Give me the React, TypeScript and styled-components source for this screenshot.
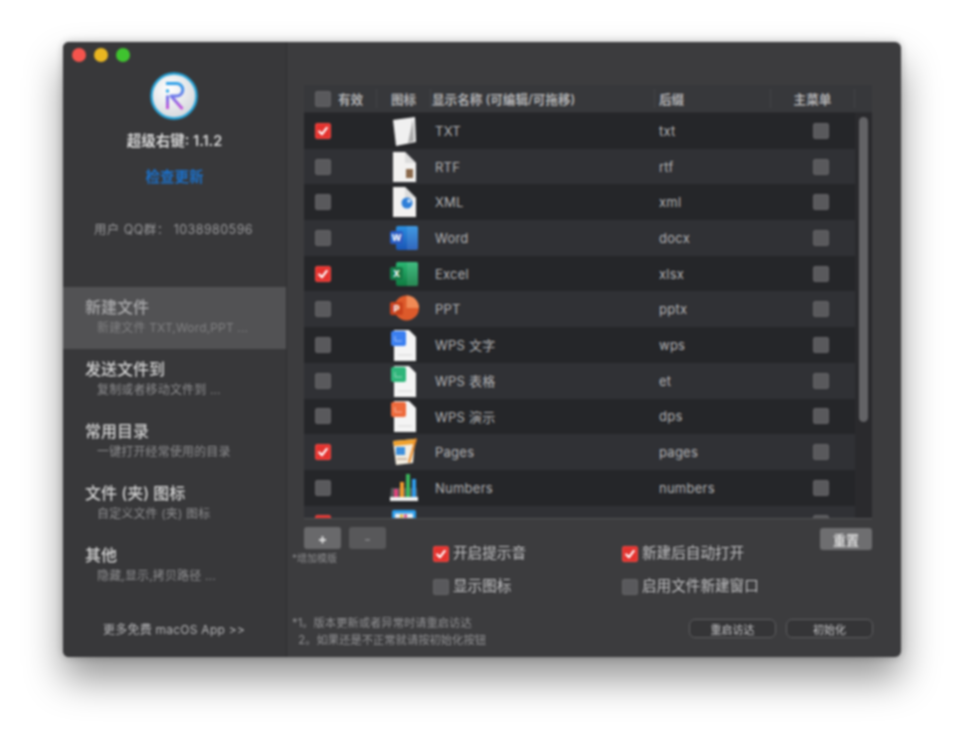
import React from "react";
import styled, { createGlobalStyle } from "styled-components";

const Global = createGlobalStyle`
  html, body { margin: 0; padding: 0; background: #ffffff; }
  body { font-family: Inter, "Noto Sans CJK SC", sans-serif; }
`;

const Page = styled.div`
  width: 964px;
  height: 740px;
  box-sizing: border-box;
  padding: 42px 63px 83px;
  overflow: hidden;
  background: #fff;
`;
const Window = styled.div`
  position: relative;
  width: 838px;
  height: 615px;
  display: flex;
  border-radius: 6px;
  background: #3c3c3e;
  box-shadow: 0 22px 38px rgba(0, 0, 0, 0.42), 0 0 8px rgba(0, 0, 0, 0.25);
  overflow: hidden;
  filter: blur(0.8px);
`;
const Lights = styled.div`
  position: absolute;
  left: 9px;
  top: 6px;
  display: flex;
  gap: 8px;
`;
const Light = styled.span<{ $c: string }>`
  width: 14px;
  height: 14px;
  border-radius: 50%;
  background: ${(p) => p.$c};
`;
const Sidebar = styled.aside`
  width: 224px;
  flex: none;
  display: flex;
  flex-direction: column;
  align-items: stretch;
  padding-top: 30px;
  background: #38383a;
  border-right: 1px solid #2f2f31;
  box-sizing: border-box;
`;
const Logo = styled.svg`
  width: 48px;
  height: 48px;
  align-self: center;
  margin-left: -1px;
`;
const AppName = styled.div`
  margin-top: 11px;
  text-align: center;
  font-size: 14.5px;
  line-height: 20px;
  font-weight: 600;
  color: #d6d6d6;
`;
const Link = styled.div`
  margin-top: 16px;
  text-align: center;
  font-size: 14.5px;
  line-height: 20px;
  font-weight: 600;
  color: #1c6fc6;
`;
const QQ = styled.div`
  margin-top: 33px;
  margin-left: -2px;
  text-align: center;
  font-size: 12.5px;
  line-height: 20px;
  color: #99999b;
  letter-spacing: 0.45px;
`;
const NavList = styled.nav`
  margin-top: 47px;
  display: flex;
  flex-direction: column;
`;
const NavItem = styled.div<{ $active?: boolean }>`
  height: 62px;
  box-sizing: border-box;
  padding: 10px 0 0 22px;
  background: ${(p) => (p.$active ? "#525254" : "transparent")};
`;
const NavTitle = styled.div<{ $active?: boolean }>`
  font-size: 16px;
  line-height: 20px;
  font-weight: 500;
  color: ${(p) => (p.$active ? "#a9a9ab" : "#d2d2d2")};
`;
const NavSub = styled.div<{ $active?: boolean }>`
  margin: 2px 0 0 12px;
  font-size: 12px;
  line-height: 18px;
  letter-spacing: 0.15px;
  color: ${(p) => (p.$active ? "#808082" : "#8e8e90")};
`;
const More = styled.div`
  margin-top: 23px;
  text-align: center;
  font-size: 12px;
  line-height: 20px;
  letter-spacing: 0.25px;
  color: #b4b4b6;
  margin-left: -1px;
`;
const Main = styled.main`
  flex: 1;
  display: flex;
  flex-direction: column;
  padding: 43px 29px 0 4px;
  min-width: 0;
`;
const Table = styled.section`
  position: relative;
  margin-left: 13px;
  height: 434px;
  flex: none;
  background: #2a2a2d;
  border-bottom: 1px solid #525254;
  box-sizing: border-box;
  overflow: hidden;
`;
const Columns = `73px 54px 224px 116px 84px 17px`;
const Header = styled.div`
  display: grid;
  grid-template-columns: ${Columns};
  height: 28px;
  background: #37383b;
  border-bottom: 1px solid #2d2d30;
  box-sizing: border-box;
`;
const HeadCell = styled.div<{ $center?: boolean; $last?: boolean; $pad?: number }>`
  display: flex;
  align-items: center;
  justify-content: ${(p) => (p.$center ? "center" : "flex-start")};
  gap: 7px;
  padding-left: ${(p) => (p.$center ? 0 : p.$pad ?? 1)}px;
  font-size: 12.6px;
  font-weight: 600;
  color: #b0b0b2;
  border-right: ${(p) => (p.$last ? "none" : "1px solid #434446")};
  margin: 4px 0;
  white-space: nowrap;
`;
const FirstHead = styled(HeadCell)`
  padding-left: 11px;
`;
const Body = styled.div`
  display: flex;
  flex-direction: column;
  width: 551px;
`;
const Row = styled.div<{ $odd: boolean }>`
  display: grid;
  grid-template-columns: 73px 54px 224px 116px 84px;
  flex: none;
  height: 35.7px;
  align-items: center;
  background: ${(p) => (p.$odd ? "#252629" : "#303135")};
  font-size: 13px;
  color: #b4b4b6;
`;
const BoxCell = styled.div`
  padding-left: 11px;
  display: flex;
`;
const IconCell = styled.div`
  display: flex;
  justify-content: center;
`;
const NameCell = styled.div`
  padding-left: 4px;
  letter-spacing: 0.25px;
`;
const MenuCell = styled.div`
  display: flex;
  justify-content: center;
  padding-left: 15px;
`;
const Box = styled.span<{ $on?: boolean }>`
  width: 16px;
  height: 16px;
  flex: none;
  border-radius: 3px;
  display: inline-flex;
  align-items: center;
  justify-content: center;
  background: ${(p) => (p.$on ? "#e4332f" : "#59595c")};
  box-shadow: inset 0 0 0 1px ${(p) => (p.$on ? "#ee4a45" : "#636366")};
`;
const ScrollThumb = styled.div`
  position: absolute;
  left: 555px;
  top: 32px;
  width: 9px;
  height: 305px;
  border-radius: 5px;
  background: #636366;
`;
const Controls = styled.div`
  display: grid;
  grid-template-columns: 142px 189px 1fr auto;
  padding-top: 8px;
  height: 96px;
  box-sizing: border-box;
`;
const LeftTools = styled.div`
  display: flex;
  flex-direction: column;
`;
const ToolRow = styled.div`
  display: flex;
  gap: 8px;
  margin-left: 13px;
`;
const ToolBtn = styled.div<{ $dim?: boolean }>`
  width: 37px;
  height: 22px;
  border-radius: 3px;
  background: ${(p) => (p.$dim ? "#58585a" : "#69696b")};
  color: ${(p) => (p.$dim ? "#838385" : "#e2e2e2")};
  font-size: 14px;
  font-weight: 700;
  display: flex;
  align-items: center;
  justify-content: center;
`;
const Hint = styled.div`
  margin: 3px 0 0 1px;
  font-size: 10px;
  line-height: 13px;
  color: #8d8d8f;
`;
const OptionCol = styled.div`
  display: flex;
  flex-direction: column;
  gap: 16px;
  padding-top: 18px;
`;
const Option = styled.label`
  display: flex;
  align-items: center;
  gap: 4px;
  font-size: 14.6px;
  line-height: 17px;
  color: #c0c0c2;
`;
const ResetBtn = styled.div`
  width: 52px;
  height: 22px;
  margin-top: 1px;
  border-radius: 3px;
  background: #6e6e70;
  color: #dcdcdc;
  font-size: 13px;
  font-weight: 600;
  display: flex;
  align-items: center;
  justify-content: center;
`;
const Footer = styled.div`
  display: flex;
  justify-content: space-between;
  align-items: flex-start;
`;
const Notes = styled.div`
  margin-left: 1px;
  font-size: 11.3px;
  line-height: 17px;
  color: #929294;
  white-space: pre;
`;
const Actions = styled.div`
  display: flex;
  gap: 10px;
  margin-top: 4px;
  margin-right: -1px;
`;
const Outline = styled.div`
  width: 87px;
  height: 19px;
  box-sizing: border-box;
  border: 1px solid #5e5e60;
  border-radius: 6px;
  background: #353537;
  color: #c6c6c8;
  font-size: 11px;
  display: flex;
  align-items: center;
  justify-content: center;
`;

const Check = () => (
  <svg width="12" height="12" viewBox="0 0 12 12">
    <path d="M2.2 6.4 5 9.2 9.8 2.8" fill="none" stroke="#fff" strokeWidth="2.1" strokeLinecap="round" strokeLinejoin="round" />
  </svg>
);
const CheckBox = ({ on }: { on?: boolean }) => <Box $on={on}>{on && <Check />}</Box>;

const Doc = ({ children }: { children?: React.ReactNode }) => (
  <svg width="36" height="34" viewBox="0 0 36 34">
    <path d="M7 2h12l11 11v19H7z" fill="#f2f1f0" />
    <path d="M19 2v11h11z" fill="#dcdcdc" />
    {children}
  </svg>
);
const WpsDoc = ({ c }: { c: string }) => (
  <svg width="36" height="34" viewBox="0 0 36 34">
    <path d="M8 2h15l7 7v24H8z" fill="#f4f4f4" />
    <path d="M12 27h14" stroke="#d6d6d6" strokeWidth="1" />
    <rect x="5" y="3" width="15" height="15" rx="2" fill={c} />
    <path d="M9 8v5h7" stroke="#ffffff" strokeOpacity=".5" fill="none" />
  </svg>
);
const Office = ({ id, top, bottom, tile, l }: { id: string; top: string; bottom: string; tile: string; l: string }) => (
  <svg width="36" height="34" viewBox="0 0 36 34">
    <defs>
      <linearGradient id={id} x1="0" y1="0" x2="0" y2="1">
        <stop offset="0" stopColor={top} />
        <stop offset="1" stopColor={bottom} />
      </linearGradient>
    </defs>
    <rect x="10" y="5" width="22" height="24" rx="2" fill={`url(#${id})`} />
    <rect x="21" y="5" width="11" height="24" fill="#fff" fillOpacity=".1" />
    <rect x="4" y="10" width="13" height="13" rx="2" fill={tile} />
    <text x="10.5" y="20" textAnchor="middle" fontSize="9.5" fontWeight="700" fill="#fff" fontFamily="Inter, sans-serif">{l}</text>
  </svg>
);
const icons: Record<string, React.ReactNode> = {
  TXT: (
    <svg width="36" height="34" viewBox="0 0 36 34">
      <path d="M7 6 29 3l1 25-20 4z" fill="#f0f0f0" />
      <path d="M27 5l1 22-6 2z" fill="#a9a9a9" />
    </svg>
  ),
  RTF: (
    <Doc>
      <rect x="20" y="19" width="7" height="9" fill="#8b6a4c" />
    </Doc>
  ),
  XML: (
    <Doc>
      <circle cx="21" cy="18" r="5.5" fill="#2f7fd8" />
      <circle cx="23" cy="16" r="1.8" fill="#d4e8fb" />
    </Doc>
  ),
  Word: <Office id="gw" top="#2b8fe0" bottom="#1a55b5" tile="#2a5bc2" l="W" />,
  Excel: <Office id="gx" top="#2bb673" bottom="#0f7a40" tile="#167a47" l="X" />,
  PPT: (
    <svg width="36" height="34" viewBox="0 0 36 34">
      <circle cx="20.5" cy="16" r="12.5" fill="#dd5a2b" />
      <path d="M20.5 3.500a12.500 12.500 0 0 1 12.500 12.500H20.500z" fill="#f08a55" />
      <rect x="4" y="10" width="13" height="13" rx="2" fill="#c8421d" />
      <text x="10.5" y="20" textAnchor="middle" fontSize="9.5" fontWeight="700" fill="#fff" fontFamily="Inter, sans-serif">P</text>
    </svg>
  ),
  "WPS 文字": <WpsDoc c="#3b7ff0" />,
  "WPS 表格": <WpsDoc c="#2fb57a" />,
  "WPS 演示": <WpsDoc c="#ee6a3c" />,
  Pages: (
    <svg width="36" height="34" viewBox="0 0 36 34">
      <path d="M7 6 29 4l-2 24-17 2z" fill="#f2ecdf" />
      <path d="M7 6 29 4l-.5 5L8 11z" fill="#f0a12e" />
      <rect x="10" y="12" width="9" height="8" fill="#3d8fdc" />
      <path d="M29 3l2 1-7 24-2-1z" fill="#e88b2c" />
      <path d="M11 24h10" stroke="#c9b8a8" strokeWidth="2" />
    </svg>
  ),
  Numbers: (
    <svg width="36" height="34" viewBox="0 0 36 34">
      <path d="M5 17h26l1 13H4z" fill="#ececec" fillOpacity=".25" />
      <rect x="4" y="26" width="28" height="4" fill="#f2f2f2" />
      <rect x="8" y="18" width="4" height="8" fill="#e0457b" />
      <rect x="14" y="11" width="4" height="15" fill="#ef9a2d" />
      <rect x="20" y="3" width="4" height="23" fill="#3bb35a" />
      <rect x="26" y="8" width="4" height="18" fill="#2f9be8" />
    </svg>
  ),
  Keynote: (
    <svg width="36" height="34" viewBox="0 0 36 34">
      <rect x="6" y="4" width="24" height="22" rx="2" fill="#2b9be8" />
      <rect x="9" y="7.500" width="18" height="8" fill="#e8eef2" />
      <rect x="14" y="8.500" width="3" height="3" fill="#e8b52f" />
      <rect x="18" y="8.500" width="3" height="3" fill="#e0457b" />
    </svg>
  ),
};

const rows: { id: string; name: string; ext: string; on: boolean }[] = [
  { id: "TXT", name: "TXT", ext: "txt", on: true },
  { id: "RTF", name: "RTF", ext: "rtf", on: false },
  { id: "XML", name: "XML", ext: "xml", on: false },
  { id: "Word", name: "Word", ext: "docx", on: false },
  { id: "Excel", name: "Excel", ext: "xlsx", on: true },
  { id: "PPT", name: "PPT", ext: "pptx", on: false },
  { id: "WPS 文字", name: "WPS 文字", ext: "wps", on: false },
  { id: "WPS 表格", name: "WPS 表格", ext: "et", on: false },
  { id: "WPS 演示", name: "WPS 演示", ext: "dps", on: false },
  { id: "Pages", name: "Pages", ext: "pages", on: true },
  { id: "Numbers", name: "Numbers", ext: "numbers", on: false },
  { id: "Keynote", name: "", ext: "", on: true },
];

const nav: [string, string][] = [
  ["新建文件", "新建文件 TXT,Word,PPT ..."],
  ["发送文件到", "复制或者移动文件到 ..."],
  ["常用目录", "一键打开经常使用的目录"],
  ["文件 (夹) 图标", "自定义文件 (夹) 图标"],
  ["其他", "隐藏,显示,拷贝路径 ..."],
];

export default function App() {
  return (
    <Page>
      <Global />
      <Window>
        <Lights>
          <Light $c="#f5544d" />
          <Light $c="#e9b621" />
          <Light $c="#3fc32f" />
        </Lights>
        <Sidebar>
          <Logo viewBox="0 0 48 48">
            <defs>
              <linearGradient id="rg" gradientUnits="userSpaceOnUse" x1="24" y1="10" x2="24" y2="38">
                <stop offset="0" stopColor="#2aa6e8" />
                <stop offset="0.5" stopColor="#6d7bea" />
                <stop offset="1" stopColor="#d04fd8" />
              </linearGradient>
              <radialGradient id="bg" cx="0.4" cy="0.35" r="0.75">
                <stop offset="0" stopColor="#ffffff" />
                <stop offset="1" stopColor="#cfd3d8" />
              </radialGradient>
            </defs>
            <circle cx="24" cy="24" r="22.5" fill="url(#bg)" stroke="#27a3d8" strokeWidth="2.4" />
            <path d="M16 11.500h10.500a6.300 6.300 0 0 1 0 12.600H21L32.500 37" fill="none" stroke="url(#rg)" strokeWidth="3" strokeLinejoin="round" />
            <path d="M17.500 23.500V37" fill="none" stroke="url(#rg)" strokeWidth="3" />
            <circle cx="17.500" cy="19" r="1.700" fill="#2aa6e8" />
          </Logo>
          <AppName>超级右键: 1.1.2</AppName>
          <Link>检查更新</Link>
          <QQ>用户 QQ群： 1038980596</QQ>
          <NavList>
            {nav.map(([t, s], i) => (
              <NavItem key={t} $active={i === 0}>
                <NavTitle $active={i === 0}>{t}</NavTitle>
                <NavSub $active={i === 0}>{s}</NavSub>
              </NavItem>
            ))}
          </NavList>
          <More>更多免费 macOS App &gt;&gt;</More>
        </Sidebar>
        <Main>
          <Table>
            <Header>
              <FirstHead>
                <CheckBox />
                有效
              </FirstHead>
              <HeadCell $center>图标</HeadCell>
              <HeadCell>显示名称 (可编辑/可拖移)</HeadCell>
              <HeadCell $pad={4}>后缀</HeadCell>
              <HeadCell $center>主菜单</HeadCell>
              <HeadCell $last />
            </Header>
            <Body>
              {rows.map((r, i) => (
                <Row key={r.id} $odd={i % 2 === 0}>
                  <BoxCell>
                    <CheckBox on={r.on} />
                  </BoxCell>
                  <IconCell>{icons[r.id]}</IconCell>
                  <NameCell>{r.name}</NameCell>
                  <NameCell>{r.ext}</NameCell>
                  <MenuCell>
                    <CheckBox />
                  </MenuCell>
                </Row>
              ))}
            </Body>
            <ScrollThumb />
          </Table>
          <Controls>
            <LeftTools>
              <ToolRow>
                <ToolBtn>+</ToolBtn>
                <ToolBtn $dim>-</ToolBtn>
              </ToolRow>
              <Hint>*增加模版</Hint>
            </LeftTools>
            <OptionCol>
              <Option>
                <CheckBox on />
                开启提示音
              </Option>
              <Option>
                <CheckBox />
                显示图标
              </Option>
            </OptionCol>
            <OptionCol>
              <Option>
                <CheckBox on />
                新建后自动打开
              </Option>
              <Option>
                <CheckBox />
                启用文件新建窗口
              </Option>
            </OptionCol>
            <ResetBtn>重置</ResetBtn>
          </Controls>
          <Footer>
            <Notes>{"*1。版本更新或者异常时请重启访达\n  2。如果还是不正常就请按初始化按钮"}</Notes>
            <Actions>
              <Outline>重启访达</Outline>
              <Outline>初始化</Outline>
            </Actions>
          </Footer>
        </Main>
      </Window>
    </Page>
  );
}
